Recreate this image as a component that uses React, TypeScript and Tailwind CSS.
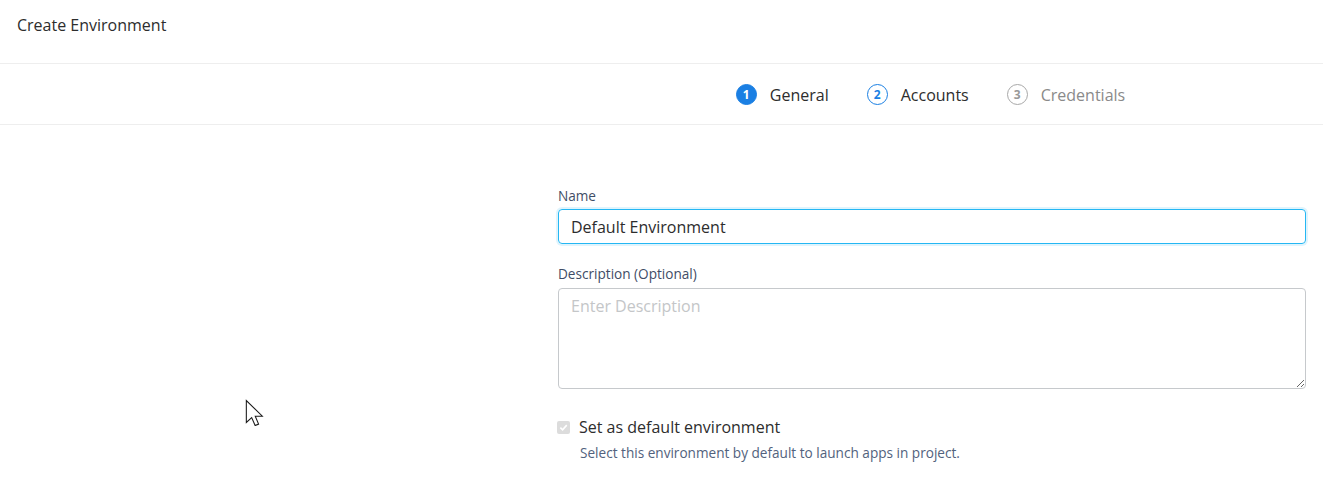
import React from "react";

const font = { fontFamily: "'Open Sans', Lato, sans-serif" };

function Step({ n, label, state }: { n: number; label: string; state: "active" | "next" | "off" }) {
  const circle =
    state === "active"
      ? "bg-[#1a7fe3] text-white border-[#1a7fe3]"
      : state === "next"
      ? "bg-white text-[#1a7fe3] border-[#1a7fe3]"
      : "bg-white text-[#999999] border-[#a8a8a8]";
  const text = state === "off" ? "text-[#8a8a8a]" : "text-[#2d2d2d]";
  return (
    <div className="flex items-center gap-[13px]">
      <div className={`w-[21px] h-[21px] rounded-full border-[1.5px] flex items-center justify-center text-[12px] font-bold ${circle}`}>
        {n}
      </div>
      <span className={`text-[16px] ${text}`}>{label}</span>
    </div>
  );
}

export default function App() {
  return (
    <div className="relative w-[1323px] h-[484px] bg-white overflow-hidden" style={font}>
      <div className="h-[64px] border-b border-[#eeeeee] flex items-center pl-[17px]">
        <span className="text-[16px] text-[#2d2d2d] -mt-[14px]">Create Environment</span>
      </div>
      <div className="h-[61px] border-b border-[#eeeeee] flex">
        <div className="w-[558px]" />
        <div className="flex-1 mr-[17px] flex items-center justify-center gap-[38px] pt-[1px] pr-[3px]">
          <Step n={1} label="General" state="active" />
          <Step n={2} label="Accounts" state="next" />
          <Step n={3} label="Credentials" state="off" />
        </div>
      </div>
      <div className="flex">
        <div className="w-[558px]" />
        <div className="flex-1 mr-[17px] pt-[63px]">
          <label className="block text-[13.6px] text-[#3f4d66] leading-[16px] mb-[5px]">Name</label>
          <input
            className="block w-full h-[35px] rounded-[4px] border border-[#25b7f3] shadow-[0_0_0_2px_rgba(37,183,243,0.15)] px-[12px] text-[16px] text-[#2d2d2d] outline-none"
            defaultValue="Default Environment"
          />
          <label className="block text-[13.6px] text-[#3f4d66] leading-[16px] mt-[22px] mb-[6px]">Description (Optional)</label>
          <textarea
            className="block w-full h-[101px] rounded-[4px] border border-[#c6c9cc] px-[12px] py-[5px] text-[16px] text-[#2d2d2d] placeholder:text-[#c4c6c8] outline-none resize-y"
            placeholder="Enter Description"
          />
          <div className="flex items-center mt-[26px]">
            <div className="w-[13px] h-[13px] rounded-[2px] bg-[#dcdcdc] flex items-center justify-center -ml-[1px]">
              <svg width="9" height="9" viewBox="0 0 10 10">
                <path d="M1.5 5.2 L4 7.6 L8.6 2.4" fill="none" stroke="#ffffff" strokeWidth="1.8" />
              </svg>
            </div>
            <span className="ml-[9px] text-[16px] text-[#2d2d2d]">Set as default environment</span>
          </div>
          <div className="ml-[22px] mt-[4px] text-[13.6px] text-[#52627d]">Select this environment by default to launch apps in project.</div>
        </div>
      </div>
      <svg className="absolute left-[245px] top-[399px]" width="20" height="27" viewBox="0 0 15 20">
        <path d="M1 1 L1 17.5 L5 13.8 L7.6 19.8 L10.2 18.7 L7.7 12.8 L13 12.8 Z" fill="#ffffff" stroke="#1a1a1a" strokeWidth="0.8" strokeLinejoin="miter" />
      </svg>
    </div>
  );
}
